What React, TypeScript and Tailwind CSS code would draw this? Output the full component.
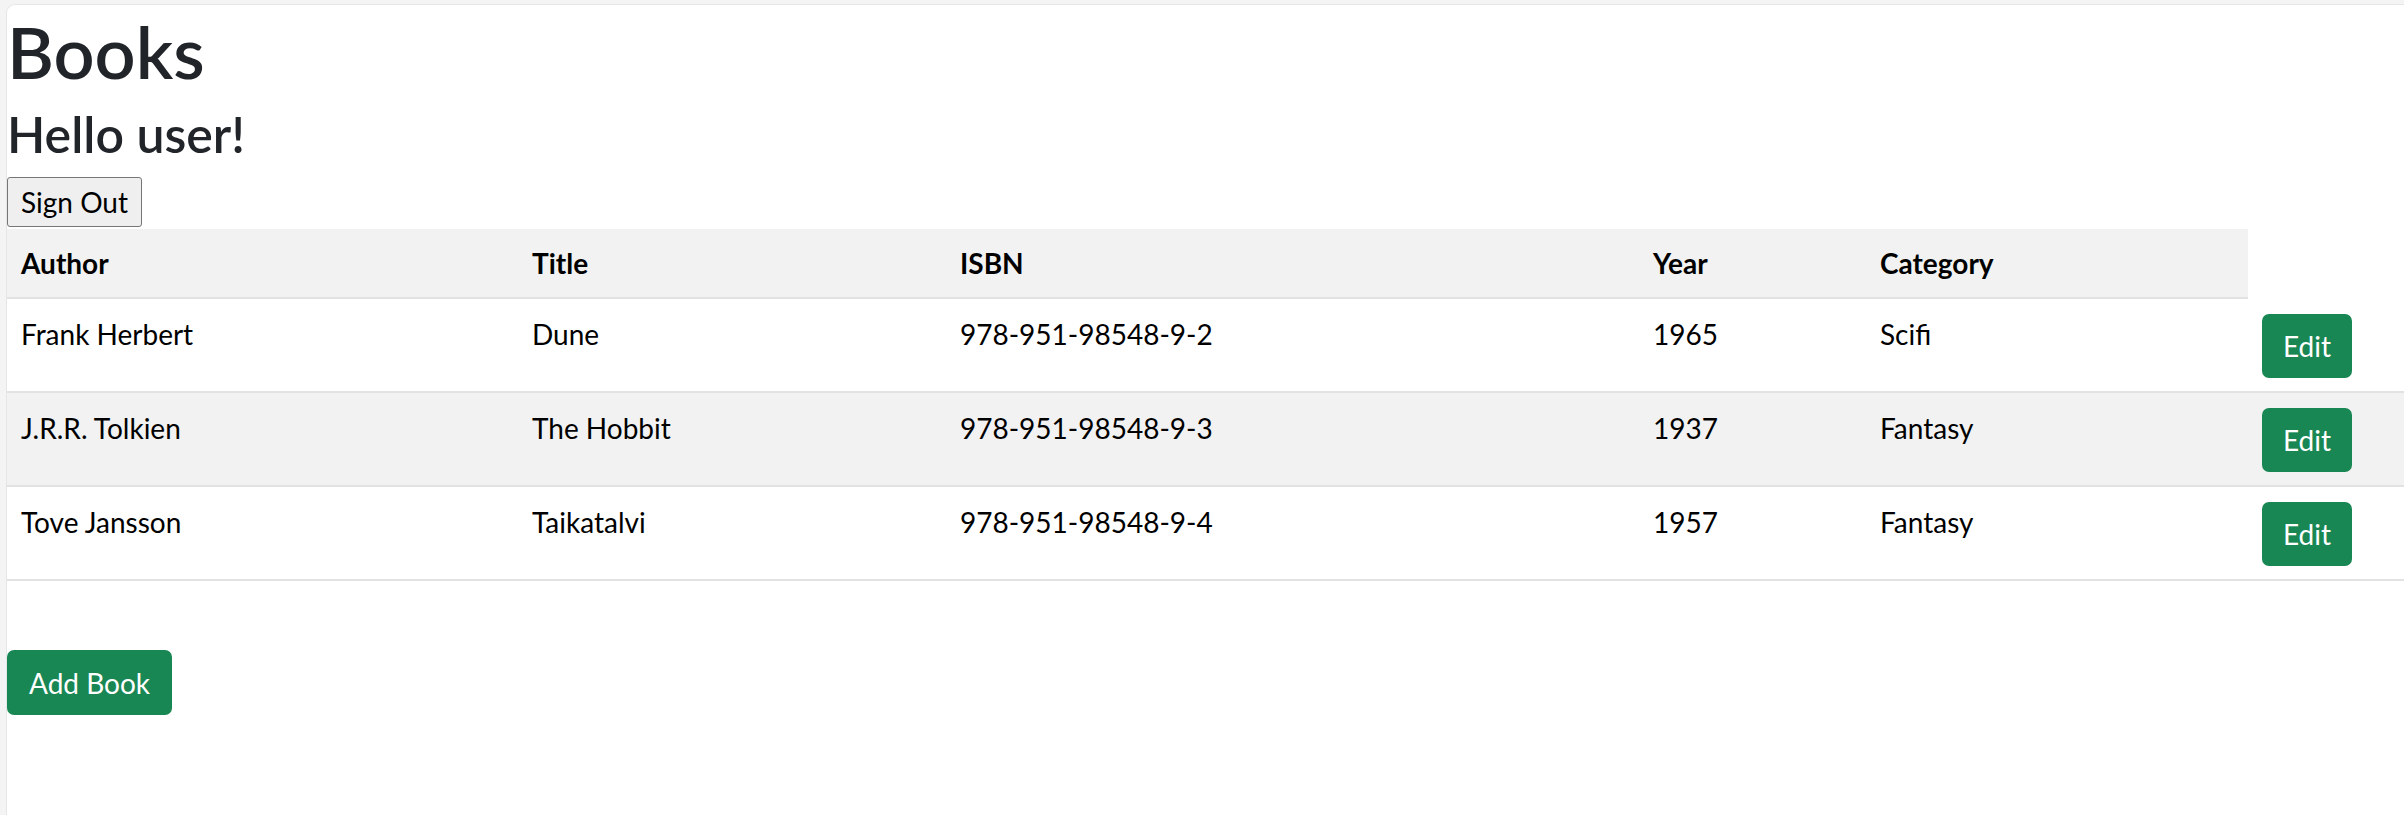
const books = [
  { author: "Frank Herbert", title: "Dune", isbn: "978-951-98548-9-2", year: 1965, category: "Scifi" },
  { author: "J.R.R. Tolkien", title: "The Hobbit", isbn: "978-951-98548-9-3", year: 1937, category: "Fantasy" },
  { author: "Tove Jansson", title: "Taikatalvi", isbn: "978-951-98548-9-4", year: 1957, category: "Fantasy" },
]

export default function App() {
  return (
    <div className="min-h-screen bg-[#f4f4f4] pt-[4px] pl-[6px] font-['Lato','Open_Sans',sans-serif]">
      <div className="min-h-[811px] bg-white rounded-tl-[9px] border-t border-l border-[#e6e6e6]">
        {/* Header */}
        <h1 className="mt-[4px] mb-[12px] text-[72px] leading-[84px] font-semibold text-[#212529]">Books</h1>
        <h3 className="mb-[14px] text-[50px] leading-[58px] font-semibold text-[#212529]">Hello user!</h3>
        <button className="block mb-[2px] h-[50px] px-[13px] bg-[#efefef] border border-[#767676] rounded-[3px] text-[28px] leading-[40px] text-black">
          Sign Out
        </button>

        {/* Books table */}
        <table className="w-full table-fixed border-separate border-spacing-0 text-[28px] leading-[40px] text-black">
          <colgroup>
            <col className="w-[511px]" />
            <col className="w-[428px]" />
            <col className="w-[693px]" />
            <col className="w-[227px]" />
            <col className="w-[382px]" />
            <col />
          </colgroup>
          <tbody>
            <tr>
              {["Author", "Title", "ISBN", "Year", "Category"].map((h) => (
                <th key={h} className="bg-[#f2f2f2] border-b-2 border-[#e2e2e2] px-[14px] py-[14px] text-left font-bold align-top">
                  {h}
                </th>
              ))}
            </tr>
            {books.map((b, i) => (
              <tr key={b.isbn} className={i === 1 ? "bg-[#f2f2f2]" : "bg-white"}>
                <td className="border-b-2 border-[#e2e2e2] px-[14px] pt-[15px] pb-[13px] align-top">{b.author}</td>
                <td className="border-b-2 border-[#e2e2e2] px-[14px] pt-[15px] pb-[13px] align-top">{b.title}</td>
                <td className="border-b-2 border-[#e2e2e2] px-[14px] pt-[15px] pb-[13px] align-top">{b.isbn}</td>
                <td className="border-b-2 border-[#e2e2e2] px-[14px] pt-[15px] pb-[13px] align-top">{b.year}</td>
                <td className="border-b-2 border-[#e2e2e2] px-[14px] pt-[15px] pb-[13px] align-top">{b.category}</td>
                <td className="border-b-2 border-[#e2e2e2] px-[14px] pt-[15px] pb-[13px] align-top">
                  <button className="block h-[64px] px-[21px] bg-[#198754] rounded-[7px] text-white text-[28px] leading-[40px]">
                    Edit
                  </button>
                </td>
              </tr>
            ))}
          </tbody>
        </table>

        <button className="block mt-[69px] h-[65px] px-[22px] bg-[#198754] rounded-[7px] text-white text-[28px] leading-[40px]">
          Add Book
        </button>
      </div>
    </div>
  )
}
